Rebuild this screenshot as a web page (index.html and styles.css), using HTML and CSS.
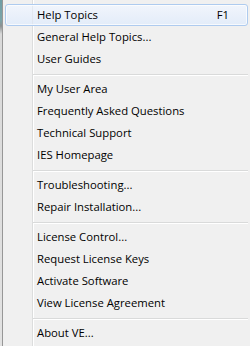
FILE: index.html
```html
<!DOCTYPE html>
<html>
<head>
<meta charset="utf-8">
<link rel="stylesheet" href="styles.css">
</head>
<body>
<div class="screen">
  <div class="edge"></div>
  <div class="menu">
    <div class="item active"><span class="label">Help Topics</span><span class="key">F1</span></div>
    <div class="item"><span class="label">General Help Topics...</span></div>
    <div class="item"><span class="label">User Guides</span></div>
    <div class="sep"></div>
    <div class="item"><span class="label">My User Area</span></div>
    <div class="item"><span class="label">Frequently Asked Questions</span></div>
    <div class="item"><span class="label">Technical Support</span></div>
    <div class="item"><span class="label">IES Homepage</span></div>
    <div class="sep"></div>
    <div class="item"><span class="label">Troubleshooting...</span></div>
    <div class="item"><span class="label">Repair Installation...</span></div>
    <div class="sep"></div>
    <div class="item"><span class="label">License Control...</span></div>
    <div class="item"><span class="label">Request License Keys</span></div>
    <div class="item"><span class="label">Activate Software</span></div>
    <div class="item"><span class="label">View License Agreement</span></div>
    <div class="sep"></div>
    <div class="item"><span class="label">About VE...</span></div>
  </div>
</div>
</body>
</html>
```
FILE: styles.css
```css
html, body {
  margin: 0;
  padding: 0;
}
body {
  width: 250px;
  height: 346px;
  overflow: hidden;
  background: #f0f0f0;
  font-family: "Open Sans", "Noto Sans", sans-serif;
  font-size: 11.3px;
  color: #000;
}
.screen {
  display: flex;
  height: 346px;
}
.edge {
  width: 2px;
  flex: none;
  background: linear-gradient(#6f9ea5 0, #7ba4a8 20px, #8c9192 26px, #d9d9d9 34px, #e2e2e2 100%);
}
.menu {
  flex: 1;
  border-left: 1px solid #979797;
  padding: 4px 2px 2px 2px;
  background:
    linear-gradient(to right, transparent 29px, #dcdddd 29px, #dcdddd 30px, #ffffff 30px, #ffffff 31px, transparent 31px),
    #f0f0f0;
}
.item {
  box-sizing: border-box;
  height: 22px;
  line-height: 22px;
  display: flex;
  align-items: center;
  padding: 0 19px 0 32px;
  white-space: nowrap;
}
.label {
  flex: 1;
}
.active {
  border: 1px solid #aecbef;
  border-radius: 3px;
  padding: 0 18px 0 31px;
  background:
    linear-gradient(to right, transparent 26px, rgba(220,225,232,0.6) 26px, rgba(220,225,232,0.6) 27px, transparent 27px),
    linear-gradient(#f1f5fc, #e3ecf9);
  box-shadow: inset 0 0 0 1px rgba(255,255,255,0.7);
}
.sep {
  height: 8px;
  margin-left: 28px;
  background: linear-gradient(to bottom, transparent 4px, #d9dada 4px, #d9dada 5px, #ffffff 5px, #ffffff 6px, transparent 6px);
}
```
